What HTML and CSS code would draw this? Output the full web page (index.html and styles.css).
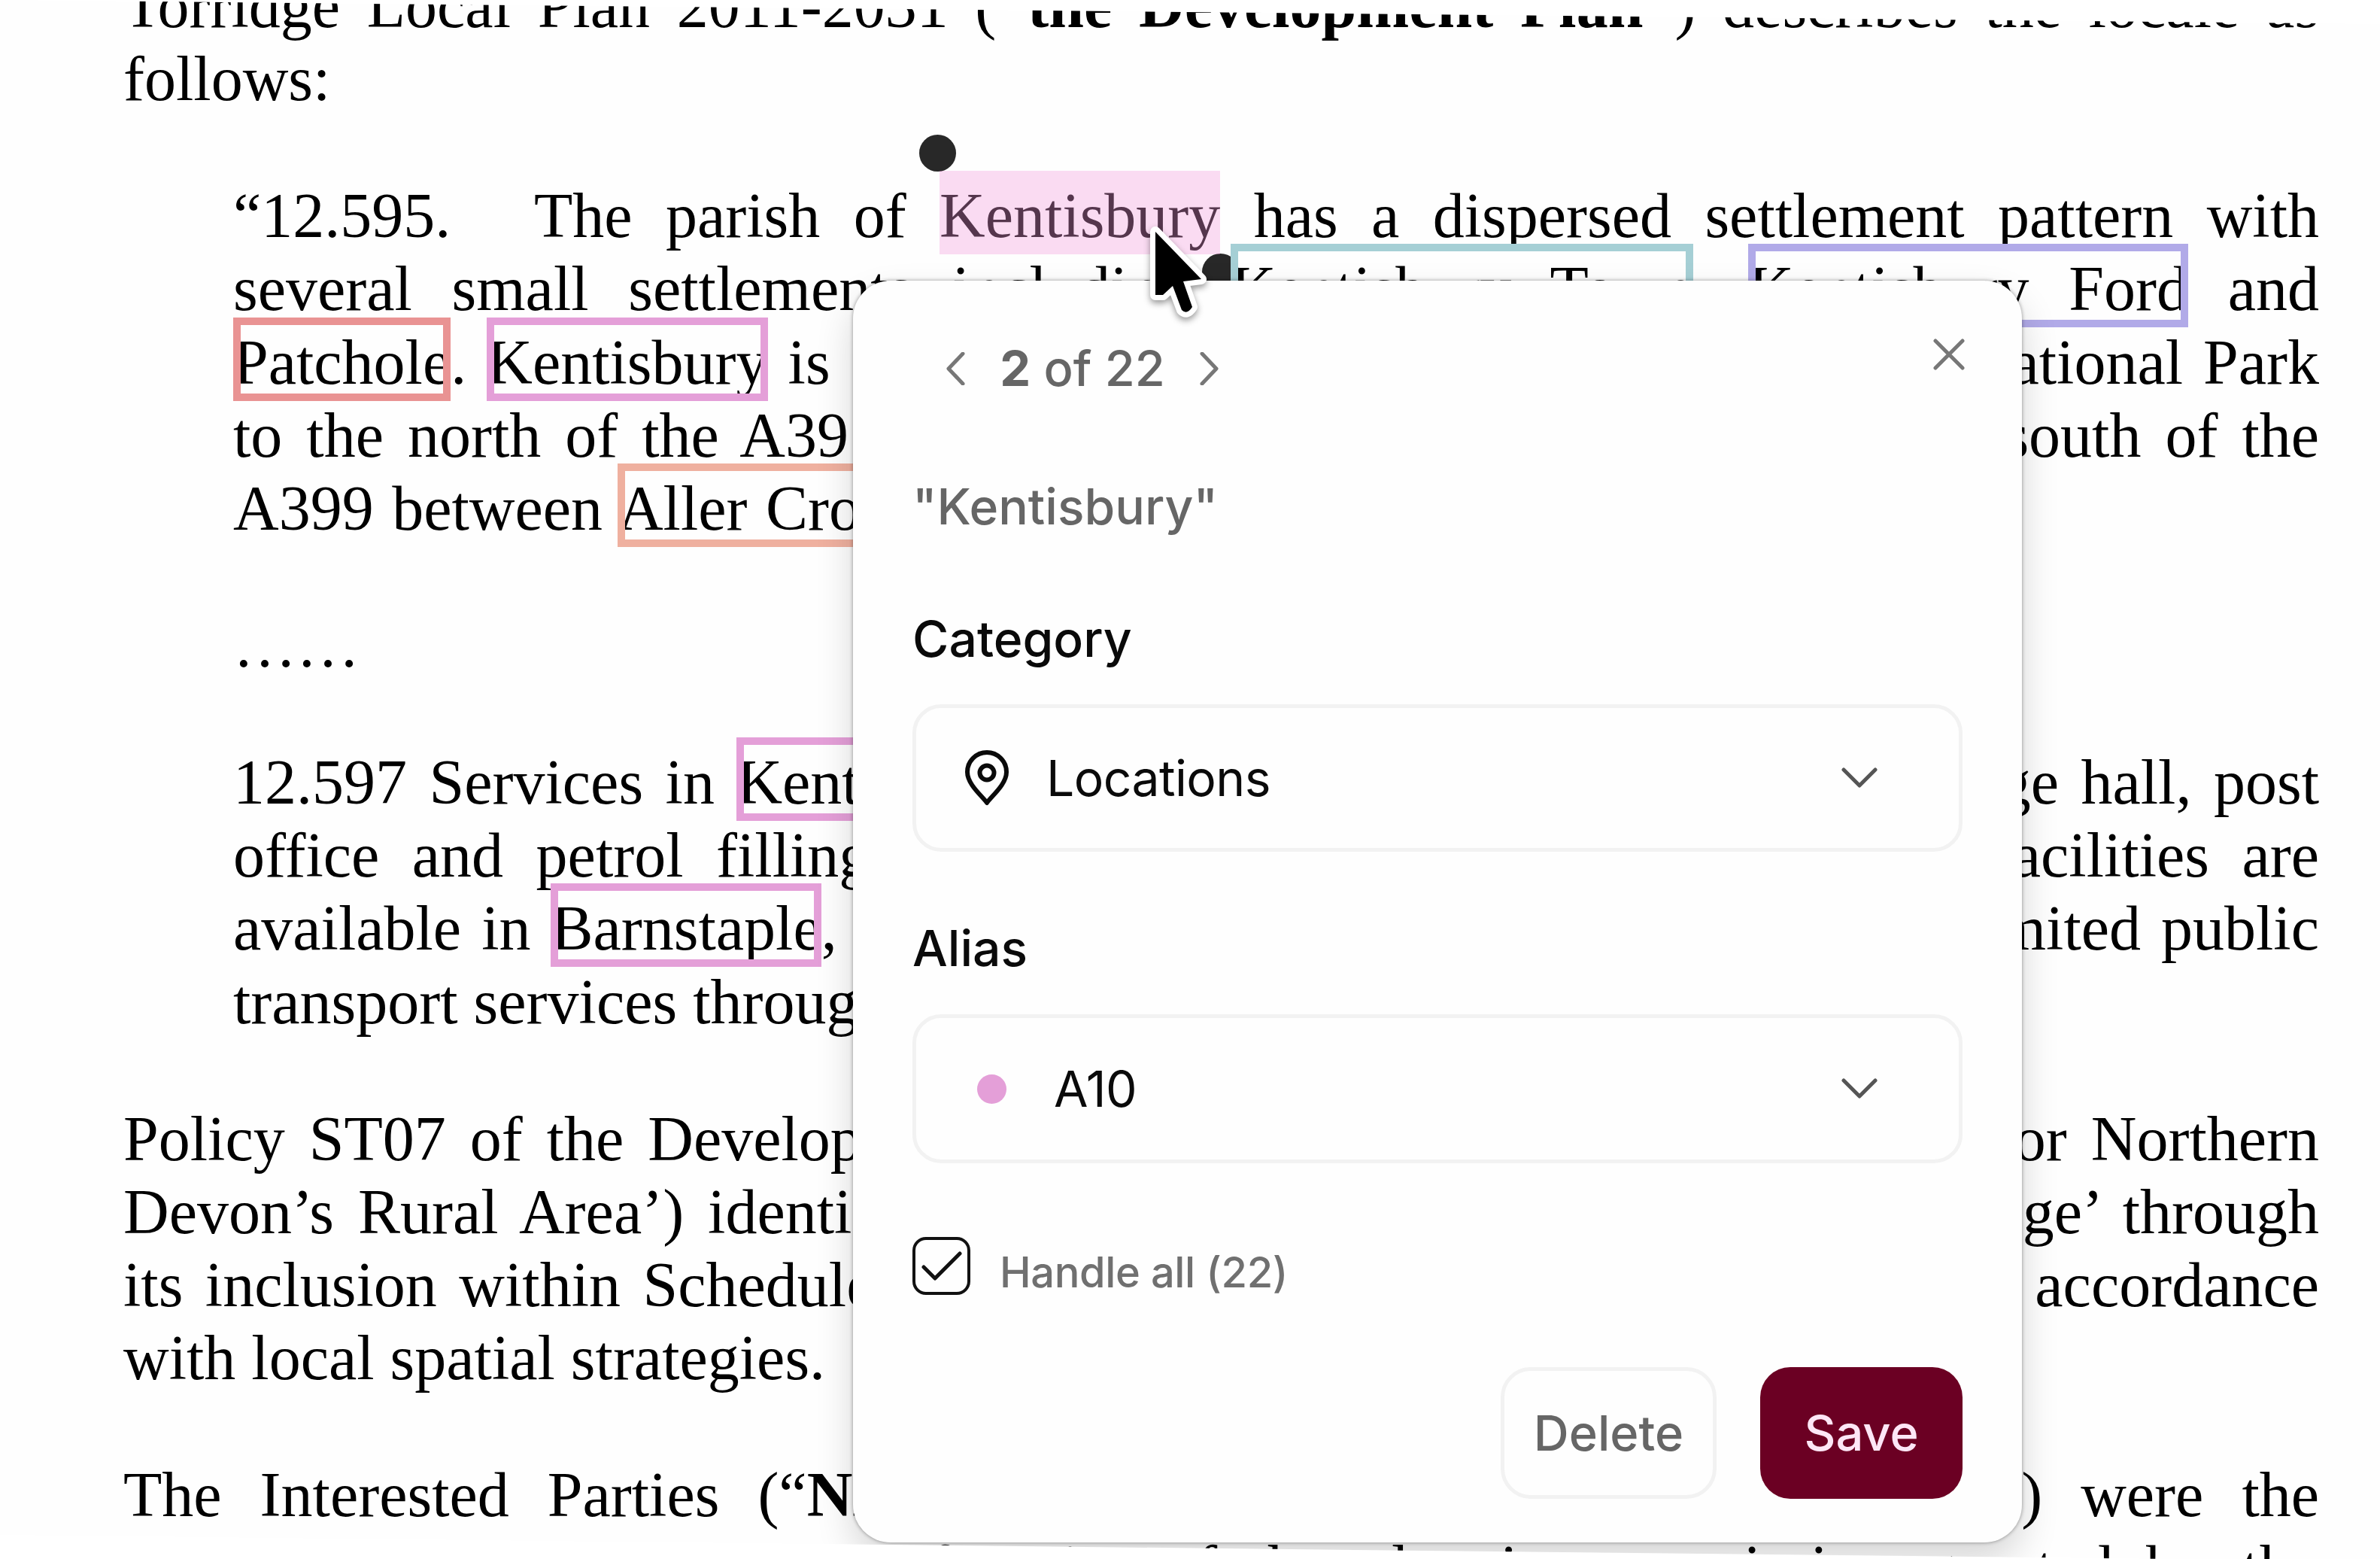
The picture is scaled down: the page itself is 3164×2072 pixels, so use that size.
FILE: index.html
```
<!DOCTYPE html>
<html lang="en">
  <head>
    <meta charset="UTF-8">
    <meta name="viewport" content="width=device-width, initial-scale=1.0">
    <title>Document review</title>
    <link rel="stylesheet" href="styles.css">
  </head>
  <body>
    <div class="page">
      <div class="document">
        <div class="paragraph">
          <p class="line full">Torridge Local Plan 2011-2031 (<b>“the Development Plan”</b>) describes the locale as</p>
          <p class="line">follows:</p>
        </div>

        <div class="paragraph quote">
          <p class="line numbered">
            <span class="number">“12.595.</span>
            <span class="full rest">The parish of <span class="selected">Kentisbury<i class="handle start"></i><i class="handle end"></i></span> has a dispersed settlement pattern with</span>
          </p>
          <p class="line full">several small settlements including <span class="tag teal">Kentisbury Town</span>, <span class="tag violet">Kentisbury Ford</span> and</p>
          <p class="line split gap-s"><span><span class="tag red">Patchole</span>. <span class="tag pink">Kentisbury</span> is</span><span>National Park</span></p>
          <p class="line split gap-m"><span>to the north of the A39</span><span>south of the</span></p>
          <p class="line gap-xs">A399 between <span class="tag orange">Aller Cross</span></p>
        </div>

        <div class="paragraph quote">
          <p class="line">……</p>
        </div>

        <div class="paragraph quote">
          <p class="line split gap-sm"><span>12.597 Services in <span class="tag pink">Kentisbury</span></span><span>village hall, post</span></p>
          <p class="line split gap-l"><span>office and petrol filling</span><span>facilities are</span></p>
          <p class="line split gap-s"><span>available in <span class="tag pink">Barnstaple</span>,</span><span>limited public</span></p>
          <p class="line">transport services through</p>
        </div>

        <div class="paragraph">
          <p class="line split gap-m"><span>Policy ST07 of the Development</span><span>for Northern</span></p>
          <p class="line split gap-m"><span>Devon’s Rural Area’) identifies</span><span>Village’ through</span></p>
          <p class="line split gap-sm"><span>its inclusion within Schedule</span><span>accordance</span></p>
          <p class="line">with local spatial strategies.</p>
        </div>

        <div class="paragraph">
          <p class="line split gap-xl"><span>The Interested Parties (“<b>NDC</b></span><span>”) were the</span></p>
          <p class="line last gap-l">beneficiaries of the planning permission granted by the</p>
        </div>
      </div>

      <div class="popup">
        <div class="popup-header">
          <div class="pager">
            <svg class="arrow" viewBox="0 0 26 44"><path d="M23 2 4 22l19 20"/></svg>
            <span class="count"><b>2</b> of 22</span>
            <svg class="arrow" viewBox="0 0 26 44"><path d="m3 2 19 20L3 42"/></svg>
          </div>
          <svg class="close" viewBox="0 0 42 42"><path d="m3 3 36 36M39 3 3 39"/></svg>
        </div>

        <div class="quoted">"Kentisbury"</div>

        <div class="label category-label">Category</div>
        <div class="select">
          <svg class="pin" viewBox="0 0 60 74">
            <path d="M30 70C25 62 4 46 4 29a26 26 0 0 1 52 0C56 46 35 62 30 70Z"/>
            <circle cx="30" cy="30" r="9.5"/>
          </svg>
          <span>Locations</span>
          <svg class="chevron" viewBox="0 0 48 28"><path d="m3 3 21 21L45 3"/></svg>
        </div>

        <div class="label alias-label">Alias</div>
        <div class="select alias">
          <span class="dot"></span>
          <span>A10</span>
          <svg class="chevron" viewBox="0 0 48 28"><path d="m3 3 21 21L45 3"/></svg>
        </div>

        <div class="check-row">
          <div class="checkbox">
            <svg viewBox="0 0 54 42"><path d="m3 22 15 15L51 4"/></svg>
          </div>
          <span class="check-text">Handle all (22)</span>
        </div>

        <div class="buttons">
          <button class="delete">Delete</button>
          <button class="save">Save</button>
        </div>
      </div>

      <svg class="cursor" viewBox="0 0 90 140">
        <path class="cursor-edge" d="M16 13v84h10l13-12 12 32q7 7 14-4L53 79l24-3Z"/>
        <path d="M16 13v84h10l13-12 12 32q7 7 14-4L53 79l24-3Z"/>
      </svg>
    </div>
  </body>
</html>
```
FILE: styles.css
```
body {
  margin: 0;
  background-color: #fff;
  overflow: hidden;
}

.page {
  position: relative;
  width: 3164px;
  height: 2072px;
  overflow: hidden;
  background-color: #fefefe;
  /* the sheet is tilted slightly, so its top and bottom edges slope */
  clip-path: polygon(0 0, 100% 32px, 100% 2075px, 0 2040px);
}

/* document */
.document {
  margin-top: -41px;
  padding: 0 81px 0 164px;
  font-family: "Liberation Serif", "Times New Roman", serif;
  font-size: 84px;
  line-height: 97.15px;
  color: #000;
}

.paragraph {
  margin-bottom: 85px;
}

.quote {
  padding-left: 146px;
}

.line {
  margin: 0;
  height: 97.15px;
  white-space: nowrap;
}

.full {
  white-space: normal;
  text-align: justify;
  text-align-last: justify;
}

.numbered,
.split {
  display: flex;
}

.number {
  width: 400px;
}

.rest {
  flex: 1;
}

.split {
  justify-content: space-between;
}

.last {
  text-align: right;
}

.gap-xs { word-spacing: 3.5px; }
.gap-s { word-spacing: 6px; }
.gap-sm { word-spacing: 8.5px; }
.gap-m { word-spacing: 11px; }
.gap-l { word-spacing: 22.5px; }
.gap-xl { word-spacing: 30px; }

.tag,
.selected {
  position: relative;
}

.selected {
  color: #222;
}

.tag::after,
.selected::after {
  content: "";
  position: absolute;
  inset: -13px 0 -5px;
}

.tag::after {
  border: 10px solid;
}

.teal::after { border-color: #a5cfd5; }
.violet::after { border-color: #b1aae8; }
.red::after { border-color: #e99393; }
.pink::after { border-color: #e49fd8; }
.orange::after { border-color: #efb09f; }

.selected::after {
  background-color: rgba(240, 115, 208, 0.25);
}

.handle {
  position: absolute;
  width: 49px;
  height: 49px;
  border-radius: 50%;
  background-color: #282828;
}

.start {
  left: -27px;
  top: -61px;
}

.end {
  right: -25px;
  bottom: -53px;
}

/* popup */
.popup {
  position: absolute;
  left: 1134px;
  top: 373px;
  width: 1554px;
  height: 1677px;
  box-sizing: border-box;
  padding: 77px 79px 0;
  border-radius: 50px;
  background-color: #fefefe;
  box-shadow: 0 0 5px rgba(0, 0, 0, 0.4), 0 24px 50px rgba(0, 0, 0, 0.16);
  font-family: Inter, sans-serif;
  font-size: 66px;
  line-height: 80px;
  color: #0a0a0a;
}

.popup svg {
  fill: none;
  stroke: #777;
  stroke-width: 5;
  stroke-linecap: round;
  stroke-linejoin: round;
}

.popup-header {
  display: flex;
  justify-content: space-between;
  height: 80px;
}

.pager {
  display: flex;
  align-items: center;
  padding-left: 44px;
  color: #666;
}

.arrow {
  width: 26px;
  height: 44px;
}

.count {
  width: 312px;
  font-size: 65px;
  font-weight: 500;
  text-align: center;
}

.close {
  width: 42px;
  height: 42px;
  margin-right: -3px;
}

.quoted {
  margin-top: 103px;
  font-weight: 500;
  color: #666;
}

.label {
  font-weight: 500;
}

.category-label {
  margin: 96px 0 47px;
}

.alias-label {
  margin: 88px 0 48px;
}

.select {
  display: flex;
  align-items: center;
  height: 196px;
  box-sizing: border-box;
  padding: 0 108px 0 64px;
  border: 5px solid #f2f2f2;
  border-radius: 38px;
  letter-spacing: -0.6px;
}

.alias {
  height: 198px;
}

.popup .pin {
  width: 60px;
  height: 74px;
  margin-right: 49px;
  stroke: #0a0a0a;
  stroke-width: 6;
}

.dot {
  width: 39px;
  height: 39px;
  margin: 0 63px 0 17px;
  border-radius: 50%;
  background-color: #e49fd8;
}

.popup .chevron {
  width: 48px;
  height: 28px;
  margin-left: auto;
  stroke: #555;
}

.check-row {
  display: flex;
  margin-top: 98px;
  height: 76px;
}

.checkbox {
  display: flex;
  align-items: center;
  justify-content: center;
  width: 77px;
  height: 77px;
  box-sizing: border-box;
  border: 4px solid #111;
  border-radius: 18px;
}

.popup .checkbox svg {
  width: 54px;
  height: 42px;
  stroke: #111;
}

.check-text {
  margin: 7px 0 0 39px;
  font-size: 56px;
  font-weight: 500;
  letter-spacing: -0.4px;
  color: #707070;
}

.buttons {
  display: flex;
  justify-content: flex-end;
  gap: 58px;
  margin-top: 97px;
}

.buttons button {
  height: 175px;
  padding: 0;
  box-sizing: border-box;
  border-radius: 40px;
  font-family: inherit;
  font-size: 65px;
  font-weight: 500;
}

.buttons .delete {
  width: 287px;
  border: 5px solid #f2f2f2;
  background-color: #fefefe;
  color: #666;
}

.buttons .save {
  width: 269px;
  border: none;
  background-color: #6b0023;
  color: #fde6f6;
}

/* mouse pointer */
.cursor {
  position: absolute;
  left: 1520px;
  top: 295px;
  width: 90px;
  height: 140px;
  filter: drop-shadow(0 4px 4px rgba(0, 0, 0, 0.4));
}

.cursor-edge {
  stroke: #fff;
  stroke-width: 14;
  stroke-linejoin: round;
}
```
